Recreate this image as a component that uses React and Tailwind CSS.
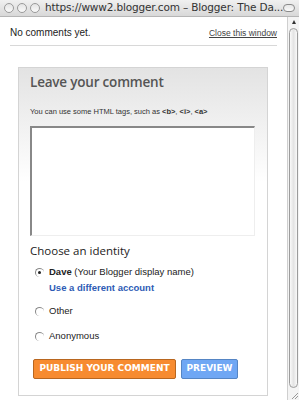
import React from "react";

function Radio({ checked }) {
  return (
    <span className="relative inline-block w-[9px] h-[9px] rounded-full border-l border-t border-[#888] bg-white shrink-0">
      {checked && <span className="absolute left-[2px] top-[2px] w-[3px] h-[3px] rounded-full bg-[#222]" />}
    </span>
  );
}

export default function App() {
  const sans = { fontFamily: '"DejaVu Sans", "Liberation Sans", sans-serif' };
  const arial = { fontFamily: '"Liberation Sans", Arial, sans-serif' };
  return (
    <div className="w-[299px] h-[400px] overflow-hidden flex flex-col bg-white" style={sans}>
      {/* title bar */}
      <div className="h-[17px] flex items-center bg-gradient-to-b from-[#f0f0f0] to-[#d8d8d8] border-b border-[#b5b5b5] shrink-0">
        <div className="flex items-center gap-[3px] pl-[4px]">
          <span className="w-[10px] h-[10px] rounded-full border border-[#9a9a9a] bg-gradient-to-b from-[#e4e4e4] to-[#fafafa]" />
          <span className="w-[10px] h-[10px] rounded-full border border-[#9a9a9a] bg-gradient-to-b from-[#e4e4e4] to-[#fafafa]" />
          <span className="w-[10px] h-[10px] rounded-full border border-[#9a9a9a] bg-gradient-to-b from-[#e4e4e4] to-[#fafafa]" />
        </div>
        <span className="ml-[5px] text-[10.5px] text-[#333] whitespace-nowrap tracking-[-0.15px]">https://www2.blogger.com – Blogger: The Da...</span>
        <span className="ml-auto mr-[4px] w-[15px] h-[8px] rounded-full border border-[#8a8a8a] bg-gradient-to-b from-[#e6e6e6] to-[#fafafa]" />
      </div>
      <div className="flex flex-1 min-h-0">
        {/* content */}
        <div className="flex-1 flex flex-col">
          <div className="flex items-center justify-between mx-[10px] mt-[9px] pb-[5px] border-b border-[#d8d8d8]" style={arial}>
            <span className="text-[10px] text-[#222] leading-[14px]">No comments yet.</span>
            <span className="text-[8.5px] text-[#444] underline leading-[14px]">Close this window</span>
          </div>
          <div className="ml-[18px] mr-[19px] mt-[21px] border border-[#d4d4d4] bg-gradient-to-b from-[#e3e3e3] via-white via-[35%] to-white pl-[11px] pr-[12px] pt-[4px] flex-1">
            <div className="text-[13.5px] font-semibold text-[#555] leading-[20px] tracking-[-0.2px]" style={{ fontFamily: '"Open Sans", sans-serif' }}>Leave your comment</div>
            <div className="mt-[15px] text-[7.5px] text-[#333] leading-[10px]" style={arial}>
              You can use some HTML tags, such as <b>&lt;b&gt;</b>, <b>&lt;i&gt;</b>, <b>&lt;a&gt;</b>
            </div>
            <div className="mt-[9px] h-[110px] bg-white border-t-2 border-l-2 border-[#888] border-r border-b border-r-[#eee] border-b-[#eee]" />
            <div className="mt-[7px] text-[11.5px] text-[#222] font-medium leading-[16px]" style={{ fontFamily: '"Open Sans", sans-serif' }}>Choose an identity</div>
            <div className="mt-[6px] pl-[5px] flex flex-col" style={arial}>
              <div className="flex items-center gap-[5px] h-[14px]">
                <Radio checked />
                <span className="text-[9.5px] text-[#222]"><b>Dave</b> (Your Blogger display name)</span>
              </div>
              <div className="ml-[14px] mt-[3px] text-[9.5px] leading-[12px] font-bold text-[#2d5bb5]">Use a different account</div>
              <div className="flex items-center gap-[5px] h-[14px] mt-[10px]">
                <Radio />
                <span className="text-[9.5px] text-[#222]">Other</span>
              </div>
              <div className="flex items-center gap-[5px] h-[14px] mt-[11px]">
                <Radio />
                <span className="text-[9.5px] text-[#222]">Anonymous</span>
              </div>
            </div>
            <div className="mt-[16px] ml-[3px] flex gap-[5px]">
              <div className="h-[20px] w-[143px] flex items-center justify-center bg-[#f78b30] border border-[#b8661f] rounded-[2px] text-white font-bold text-[9px] whitespace-nowrap">PUBLISH YOUR COMMENT</div>
              <div className="h-[20px] w-[57px] flex items-center justify-center bg-[#6fa7f4] border border-[#5585c4] rounded-[2px] text-white font-bold text-[9px] whitespace-nowrap">PREVIEW</div>
            </div>
          </div>
          <div className="h-[4px] shrink-0" />
        </div>
        {/* scrollbar */}
        <div className="w-[12px] shrink-0 flex flex-col border-l border-[#cfcfcf] bg-[#f4f4f4]">
          <div className="h-[10px] flex items-center justify-center">
            <span className="w-0 h-0 border-l-[2.5px] border-r-[2.5px] border-b-[4px] border-l-transparent border-r-transparent border-b-[#333]" />
          </div>
          <div className="flex-1 mx-[1px] mt-[1px] rounded-t-[6px] rounded-b-[6px] border border-[#9c9c9c] bg-gradient-to-r from-[#fafafa] via-[#e4e4e4] to-[#fafafa]" />
          <div className="h-[12px] flex items-end justify-end">
            <svg width="10" height="10" viewBox="0 0 10 10">
              <path d="M9 3 L3 9 M9 6 L6 9" stroke="#999" strokeWidth="1" />
            </svg>
          </div>
        </div>
      </div>
    </div>
  );
}
